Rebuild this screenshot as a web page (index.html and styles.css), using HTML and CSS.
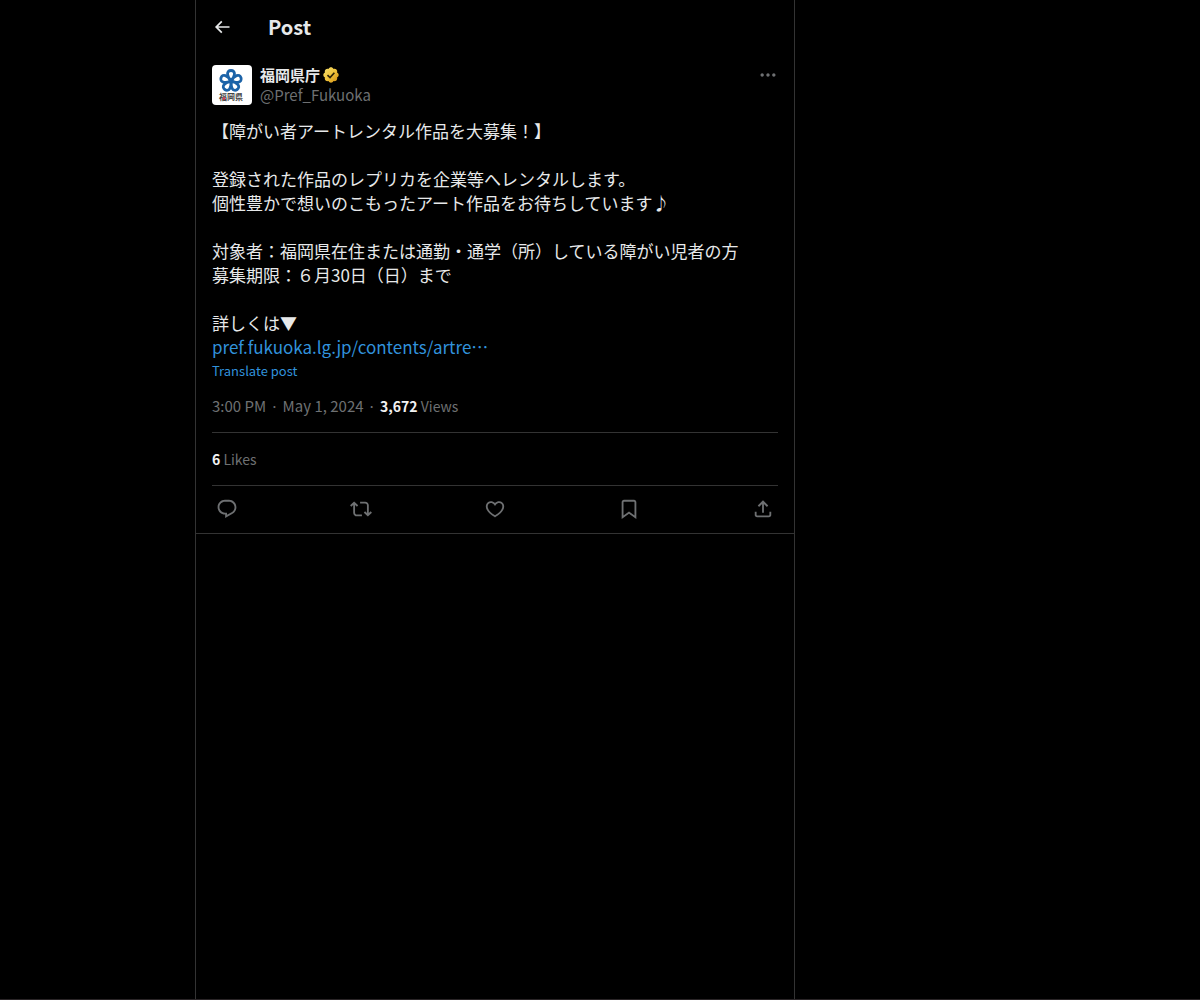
FILE: index.html
```html
<!DOCTYPE html>
<html lang="ja">

<head>
    <meta charset="UTF-8">
    <meta name="viewport" content="width=device-width, initial-scale=1.0">
    <title>Post</title>
    <link rel="stylesheet" href="styles.css">
</head>

<body>
    <main class="column">
        <header class="header">
            <button class="back" type="button" aria-label="Back">
                <svg viewBox="0 0 24 24"><path d="M7.414 13l5.043 5.04-1.414 1.42L3.586 12l7.457-7.46 1.414 1.42L7.414 11H21v2H7.414z"/></svg>
            </button>
            <h1>Post</h1>
        </header>
        <article class="post">
            <div class="user">
                <a class="avatar" href="#" aria-label="福岡県庁">
                    <svg viewBox="0 0 40 40">
                        <defs>
                            <path id="petal" d="M19 15.500C14.600 11.500 14.200 5.500 19 5.500S23.400 11.500 19 15.500z"/>
                        </defs>
                        <g class="flower">
                            <use href="#petal"/>
                            <use href="#petal" transform="rotate(72 19 16)"/>
                            <use href="#petal" transform="rotate(144 19 16)"/>
                            <use href="#petal" transform="rotate(216 19 16)"/>
                            <use href="#petal" transform="rotate(288 19 16)"/>
                        </g>
                        <text class="logo-text" x="7" y="35">福岡県</text>
                        <circle cx="12" cy="33.500" r="1.300" fill="#e0405e"/>
                    </svg>
                </a>
                <div class="names">
                    <a class="name" href="#">福岡県庁
                        <svg class="badge" viewBox="0 0 24 24">
                            <defs>
                                <linearGradient id="gold" x1="0" y1="0" x2="1" y2="1">
                                    <stop offset="0" stop-color="#f4e072"/>
                                    <stop offset=".5" stop-color="#f0c43c"/>
                                    <stop offset="1" stop-color="#d18b10"/>
                                </linearGradient>
                            </defs>
                            <path fill="url(#gold)" d="M22.250 12c0-1.430-.88-2.670-2.190-3.340.46-1.390.2-2.900-.81-3.910s-2.520-1.270-3.910-.81c-.66-1.310-1.910-2.190-3.340-2.190s-2.670.88-3.330 2.190c-1.400-.46-2.910-.2-3.920.81s-1.260 2.520-.8 3.910c-1.310.67-2.200 1.910-2.200 3.340s.89 2.670 2.200 3.340c-.46 1.390-.21 2.900.8 3.910s2.520 1.260 3.910.81c.67 1.310 1.910 2.190 3.340 2.190s2.680-.88 3.340-2.190c1.390.45 2.900.2 3.910-.81s1.270-2.520.81-3.910c1.310-.67 2.190-1.910 2.190-3.340z"/>
                            <path fill="none" stroke="#2b2108" stroke-width="2.200" d="M7.300 12.200l3.400 3.300 5.800-6.600"/>
                        </svg>
                    </a>
                    <a class="handle" href="#">@Pref_Fukuoka</a>
                </div>
                <button class="more" type="button" aria-label="More">
                    <svg viewBox="0 0 24 24"><path d="M3 12c0-1.100.9-2 2-2s2 .9 2 2-.9 2-2 2-2-.9-2-2zm9 2c1.100 0 2-.9 2-2s-.9-2-2-2-2 .9-2 2 .9 2 2 2zm7 0c1.100 0 2-.9 2-2s-.9-2-2-2-2 .9-2 2 .9 2 2 2z"/></svg>
                </button>
            </div>
            <p class="text">【障がい者アートレンタル作品を大募集！】<br>
                <br>
                登録された作品のレプリカを企業等へレンタルします。<br>
                個性豊かで想いのこもったアート作品をお待ちしています♪<br>
                <br>
                対象者：福岡県在住または通勤・通学（所）している障がい児者の方<br>
                募集期限：６月30日（日）まで<br>
                <br>
                詳しくは▼<br>
                <a href="#">pref.fukuoka.lg.jp/contents/artre…</a>
            </p>
            <button class="translate" type="button">Translate post</button>
            <div class="meta">
                <a href="#">3:00 PM</a><span class="dot">·</span><a href="#">May 1, 2024</a><span class="dot">·</span><span class="count"><strong>3,672</strong> Views</span>
            </div>
            <div class="likes"><a class="count" href="#"><strong>6</strong> Likes</a></div>
            <div class="actions">
                <button type="button" aria-label="Reply">
                    <svg viewBox="0 0 24 24"><path d="M1.751 10c0-4.420 3.584-8 8.005-8h4.366c4.490 0 8.129 3.640 8.129 8.130 0 2.960-1.607 5.680-4.196 7.110l-8.054 4.460v-3.690h-.067c-4.490.1-8.183-3.510-8.183-8.010zm8.005-6c-3.317 0-6.005 2.690-6.005 6 0 3.370 2.770 6.080 6.138 6.010l.351-.01h1.761v2.300l5.087-2.810c1.951-1.080 3.163-3.130 3.163-5.360 0-3.390-2.744-6.130-6.129-6.130H9.756z"/></svg>
                </button>
                <button type="button" aria-label="Repost">
                    <svg viewBox="0 0 24 24"><path d="M4.500 3.880l4.432 4.140-1.364 1.460L5.500 7.550V16c0 1.100.896 2 2 2H13v2H7.500c-2.209 0-4-1.790-4-4V7.550L1.432 9.480.068 8.020 4.500 3.880zM16.500 6H11V4h5.500c2.209 0 4 1.790 4 4v8.450l2.068-1.930 1.364 1.460-4.432 4.140-4.432-4.140 1.364-1.460 2.068 1.930V8c0-1.100-.896-2-2-2z"/></svg>
                </button>
                <button type="button" aria-label="Like">
                    <svg viewBox="0 0 24 24"><path d="M16.697 5.500c-1.222-.06-2.679.51-3.890 2.160l-.805 1.090-.806-1.090C9.984 6.010 8.526 5.440 7.304 5.500c-1.243.07-2.349.78-2.910 1.910-.552 1.120-.633 2.780.479 4.820 1.074 1.970 3.257 4.270 7.129 6.610 3.870-2.340 6.052-4.640 7.126-6.610 1.111-2.040 1.030-3.700.477-4.820-.561-1.130-1.666-1.840-2.908-1.910zm4.187 7.690c-1.351 2.480-4.001 5.120-8.379 7.670l-.503.3-.504-.3c-4.379-2.550-7.029-5.190-8.382-7.670-1.360-2.500-1.410-4.860-.514-6.670.887-1.790 2.647-2.910 4.601-3.010 1.651-.09 3.368.56 4.798 2.010 1.429-1.450 3.146-2.100 4.796-2.010 1.954.1 3.714 1.220 4.601 3.010.896 1.810.846 4.170-.514 6.670z"/></svg>
                </button>
                <button type="button" aria-label="Bookmark">
                    <svg viewBox="0 0 24 24"><path d="M4 4.500C4 3.120 5.119 2 6.500 2h11C18.881 2 20 3.120 20 4.500v18.440l-8-5.710-8 5.710V4.500zM6.500 4c-.276 0-.5.22-.5.5v14.560l6-4.290 6 4.290V4.500c0-.28-.224-.5-.5-.5h-11z"/></svg>
                </button>
                <button type="button" aria-label="Share">
                    <svg viewBox="0 0 24 24"><path d="M12 2.590l5.700 5.700-1.410 1.420L13 6.410V16h-2V6.410l-3.300 3.300-1.410-1.420L12 2.590zM21 15l-.02 3.510c0 1.380-1.120 2.490-2.500 2.490H5.500C4.110 21 3 19.880 3 18.500V15h2v3.500c0 .28.22.5.5.5h12.980c.28 0 .5-.22.5-.5L19 15h2z"/></svg>
                </button>
            </div>
        </article>
    </main>
</body>

</html>
```

FILE: styles.css
```css
* {
    margin: 0;
    padding: 0;
    box-sizing: border-box;
}

body {
    display: flex;
    min-height: 100vh;
    padding-left: 195px;
    background-color: #000;
    border-bottom: 1px solid #2a2527;
    color: #e7e9ea;
    font-family: "Noto Sans CJK JP", sans-serif;
    font-size: 15px;
    line-height: 20px;
}

a {
    color: inherit;
    text-decoration: none;
}

button {
    display: flex;
    align-items: center;
    justify-content: center;
    background: none;
    border: none;
    color: inherit;
    font: inherit;
    cursor: pointer;
}

svg {
    display: block;
    fill: currentColor;
}

.column {
    width: 100%;
    max-width: 600px;
    border-left: 1px solid #333;
    border-right: 1px solid #333;
}

.header {
    display: flex;
    align-items: center;
    gap: 36px;
    height: 53px;
    padding: 0 16px;
}

.header h1 {
    font-size: 20px;
    line-height: 24px;
}

.back svg {
    width: 20px;
    height: 20px;
}

.post {
    padding: 12px 16px 0;
    border-bottom: 1px solid #333;
}

.user {
    display: flex;
    align-items: flex-start;
    gap: 8px;
}

.avatar {
    width: 40px;
    height: 40px;
    background-color: #fff;
    border-radius: 4px;
    overflow: hidden;
}

.flower {
    fill: #fff;
    stroke: #1c63a8;
    stroke-width: 2.8;
}

.logo-text {
    fill: #444;
    font-size: 8px;
    font-weight: bold;
}

.names {
    display: flex;
    flex: 1;
    flex-direction: column;
    align-items: flex-start;
}

.name {
    display: flex;
    align-items: center;
    gap: 2px;
    font-weight: bold;
}

.badge {
    width: 18px;
    height: 18px;
}

.handle {
    color: #6e7072;
}

.more {
    height: 20px;
    color: #6e7072;
}

.more svg {
    width: 20px;
    height: 20px;
}

.text {
    margin-top: 14px;
    font-size: 17px;
    line-height: 24px;
}

.text a {
    color: #3192dc;
}

.translate {
    margin-top: 4px;
    color: #3192dc;
    font-size: 13px;
    line-height: 16px;
}

.meta {
    padding: 17px 0 16px;
    border-bottom: 1px solid #333;
    color: #6e7072;
}

.meta .dot {
    padding: 0 4px;
}

.count {
    font-size: 14px;
}

strong {
    color: #f2f2f2;
}

.likes {
    padding: 16px 0;
    border-bottom: 1px solid #333;
    color: #6e7072;
}

.actions {
    display: flex;
    align-items: flex-start;
    justify-content: space-between;
    padding: 8px 0 9px;
    color: #6e7072;
}

.actions button {
    width: 30px;
    height: 30px;
}

.actions svg {
    width: 22px;
    height: 22px;
}
```
